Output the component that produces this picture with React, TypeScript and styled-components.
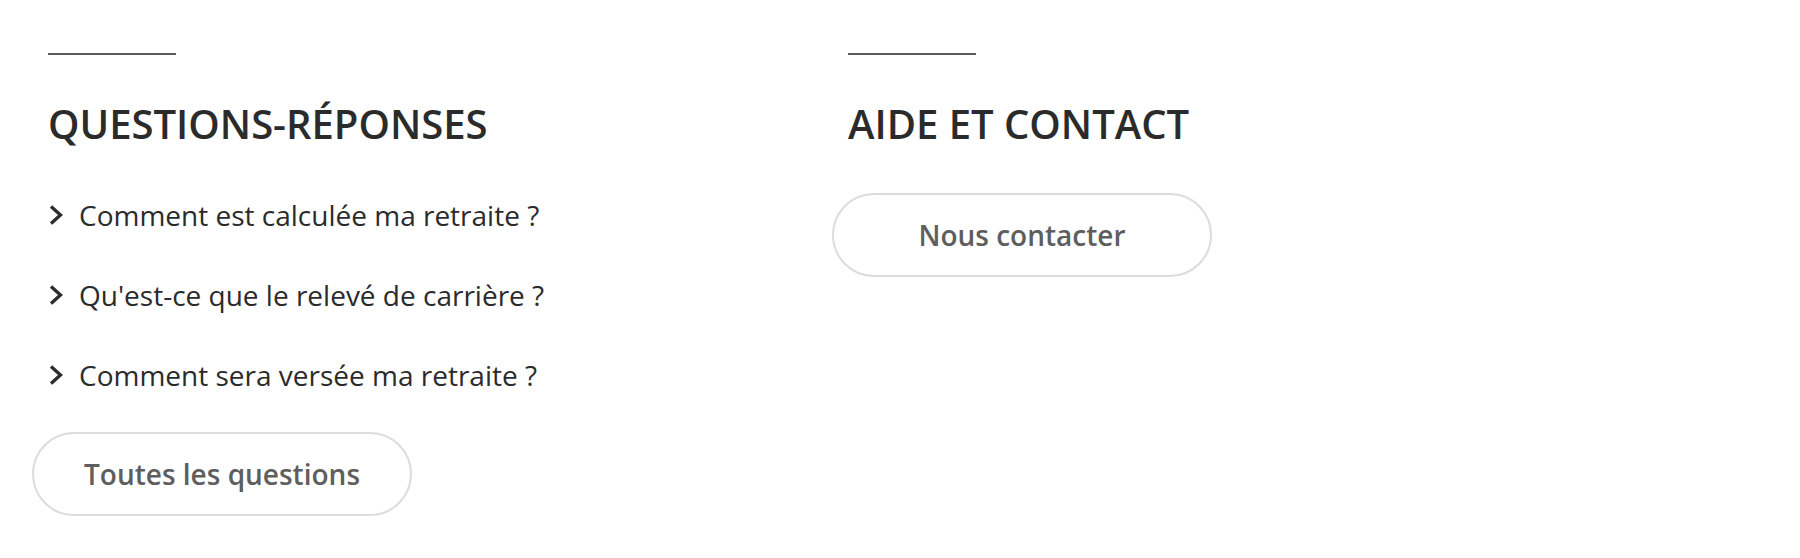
import React from 'react';
import styled, { createGlobalStyle } from 'styled-components';

const GlobalStyle = createGlobalStyle`
    body {
        margin: 0;
        background: #ffffff;
        font-family: "Open Sans", "Noto Sans", sans-serif;
    }
`

type ColumnPropsType = {
    title: string
    children: React.ReactNode
}

const questions = [
    'Comment est calculée ma retraite ?',
    "Qu'est-ce que le relevé de carrière ?",
    'Comment sera versée ma retraite ?',
]

const Chevron = () => (
    <ChevronIcon viewBox="0 0 16 22" width="16" height="22">
        <polyline points="3,2.5 12.5,11 3,19.5" fill="none" stroke="#2b2b2b" strokeWidth="3.3" strokeLinejoin="miter" />
    </ChevronIcon>
)

const Column = ({ title, children }: ColumnPropsType) => {
    return (
        <StyledColumn>
            <Rule />
            <Title>{title}</Title>
            {children}
        </StyledColumn>
    )
}

export default function App() {
    return (
        <>
            <GlobalStyle />
            <Section>
                <Column title="QUESTIONS-RÉPONSES">
                    <List>
                        {questions.map((q) => (
                            <Item key={q}>
                                <Chevron />
                                <ItemLink href="#">{q}</ItemLink>
                            </Item>
                        ))}
                    </List>
                    <PillButton $top={38}>Toutes les questions</PillButton>
                </Column>
                <Column title="AIDE ET CONTACT">
                    <PillButton $top={45}>Nous contacter</PillButton>
                </Column>
            </Section>
        </>
    )
}

const Section = styled.section`
    display: grid;
    grid-template-columns: 800px 800px;
    padding: 53px 48px 0;
`

const StyledColumn = styled.div`
    display: flex;
    flex-direction: column;
    align-items: flex-start;
`

const Rule = styled.span`
    display: block;
    width: 128px;
    height: 2px;
    background: #5c5c5c;
`

const Title = styled.h2`
    margin: 45px 0 0;
    color: #2b2b2b;
    font-size: 40px;
    font-weight: 600;
    line-height: 48px;
`

const List = styled.ul`
    list-style: none;
    margin: 48px 0 0;
    padding: 0;
    display: flex;
    flex-direction: column;
    gap: 42px;
`

const Item = styled.li`
    display: flex;
    align-items: center;
    gap: 15px;
`

const ChevronIcon = styled.svg`
    flex: none;
`

const ItemLink = styled.a`
    color: #2b2b2b;
    font-size: 28px;
    line-height: 38px;
    text-decoration: none;
`

const PillButton = styled.button<{ $top: number }>`
    margin: ${(p) => p.$top}px 0 0 -16px;
    width: 380px;
    height: 84px;
    box-sizing: border-box;
    border: 2px solid #dcdcdc;
    border-radius: 42px;
    background: #ffffff;
    color: #5e5e5e;
    font-family: "Open Sans", "Noto Sans", sans-serif;
    font-size: 28px;
    font-weight: 600;
    cursor: pointer;
`
